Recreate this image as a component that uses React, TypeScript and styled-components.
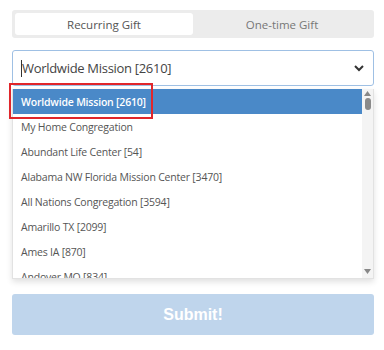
import styled, { createGlobalStyle } from 'styled-components';

const GlobalStyle = createGlobalStyle`
  html, body {
    margin: 0;
    padding: 0;
    background: #ffffff;
    font-family: 'Open Sans', 'Liberation Sans', sans-serif;
  }
`;

const Page = styled.div`
  width: 384px;
  height: 350px;
  padding: 10px 10px 0 12px;
  box-sizing: border-box;
  overflow: hidden;
`;

const Tabs = styled.div`
  display: grid;
  grid-template-columns: 1fr 1fr;
  height: 28px;
  padding: 3px;
  box-sizing: border-box;
  background: #ececec;
  border-radius: 3px;
`;

const Tab = styled.div<{ $active?: boolean }>`
  display: flex;
  align-items: center;
  justify-content: center;
  font-size: 11.5px;
  color: ${p => (p.$active ? '#555' : '#777')};
  background: ${p => (p.$active ? '#fff' : 'transparent')};
  border-radius: 3px;
`;

const SelectBox = styled.div`
  margin-top: 12px;
  height: 36px;
  box-sizing: border-box;
  border: 1px solid #9fc0e4;
  border-radius: 3px;
  display: flex;
  align-items: center;
  padding: 0 8px 0 8px;
  font-size: 13px;
  letter-spacing: -0.3px;
  color: #444;
`;

const Caret = styled.span`
  display: inline-block;
  width: 1px;
  height: 17px;
  background: #333;
`;

const SelectText = styled.span`
  flex: 1;
`;

const List = styled.div`
  position: relative;
  margin-top: 3px;
  height: 189px;
  display: flex;
  border: 1px solid #e2e2e2;
  border-top: none;
  box-shadow: 0 3px 6px rgba(0, 0, 0, 0.12);
`;

const Options = styled.div`
  flex: 1;
  overflow: hidden;
`;

const Option = styled.div<{ $selected?: boolean }>`
  height: 25px;
  display: flex;
  align-items: center;
  padding-left: 8px;
  font-size: 10.5px;
  letter-spacing: -0.2px;
  color: ${p => (p.$selected ? '#fff' : '#555')};
  background: ${p => (p.$selected ? '#4a89c8' : 'transparent')};
  font-weight: ${p => (p.$selected ? 600 : 400)};
  white-space: nowrap;
`;

const Highlight = styled.div`
  position: absolute;
  left: -4px;
  top: -6px;
  width: 144px;
  height: 36px;
  box-sizing: border-box;
  border: 2px solid #e0262b;
  pointer-events: none;
`;

const Scrollbar = styled.div`
  width: 11px;
  background: #f4f4f4;
  display: flex;
  flex-direction: column;
  align-items: center;
  padding-top: 2px;
`;

const Thumb = styled.div`
  width: 6px;
  height: 12px;
  border-radius: 3px;
  background: #8a8a8a;
  margin-top: 2px;
`;

const Spacer = styled.div`
  flex: 1;
`;

const Submit = styled.button`
  margin-top: 15px;
  width: 100%;
  height: 41px;
  border: none;
  border-radius: 3px;
  background: #bfd5ec;
  color: #fff;
  font-family: 'Liberation Sans', Arial, sans-serif;
  font-weight: 700;
  font-size: 16px;
`;

const options = [
  'Worldwide Mission [2610]',
  'My Home Congregation',
  'Abundant Life Center [54]',
  'Alabama NW Florida Mission Center [3470]',
  'All Nations Congregation [3594]',
  'Amarillo TX [2099]',
  'Ames IA [870]',
  'Andover MO [834]',
];

export default function App() {
  return (
    <Page>
      <GlobalStyle />
      <Tabs>
        <Tab $active>Recurring Gift</Tab>
        <Tab>One-time Gift</Tab>
      </Tabs>
      <SelectBox>
        <Caret />
        <SelectText>Worldwide Mission [2610]</SelectText>
        <svg width="12" height="8" viewBox="0 0 12 8">
          <path d="M2 2 L6 6 L10 2" fill="none" stroke="#333" strokeWidth="2" />
        </svg>
      </SelectBox>
      <List>
        <Options>
          {options.map((o, i) => (
            <Option key={o} $selected={i === 0}>{o}</Option>
          ))}
        </Options>
        <Scrollbar>
          <svg width="7" height="5" viewBox="0 0 7 5">
            <path d="M0 5 L3.5 0 L7 5 Z" fill="#888" />
          </svg>
          <Thumb />
          <Spacer />
          <svg width="7" height="5" viewBox="0 0 7 5" style={{ marginBottom: 4 }}>
            <path d="M0 0 L3.5 5 L7 0 Z" fill="#888" />
          </svg>
        </Scrollbar>
        <Highlight />
      </List>
      <Submit>Submit!</Submit>
    </Page>
  );
}
